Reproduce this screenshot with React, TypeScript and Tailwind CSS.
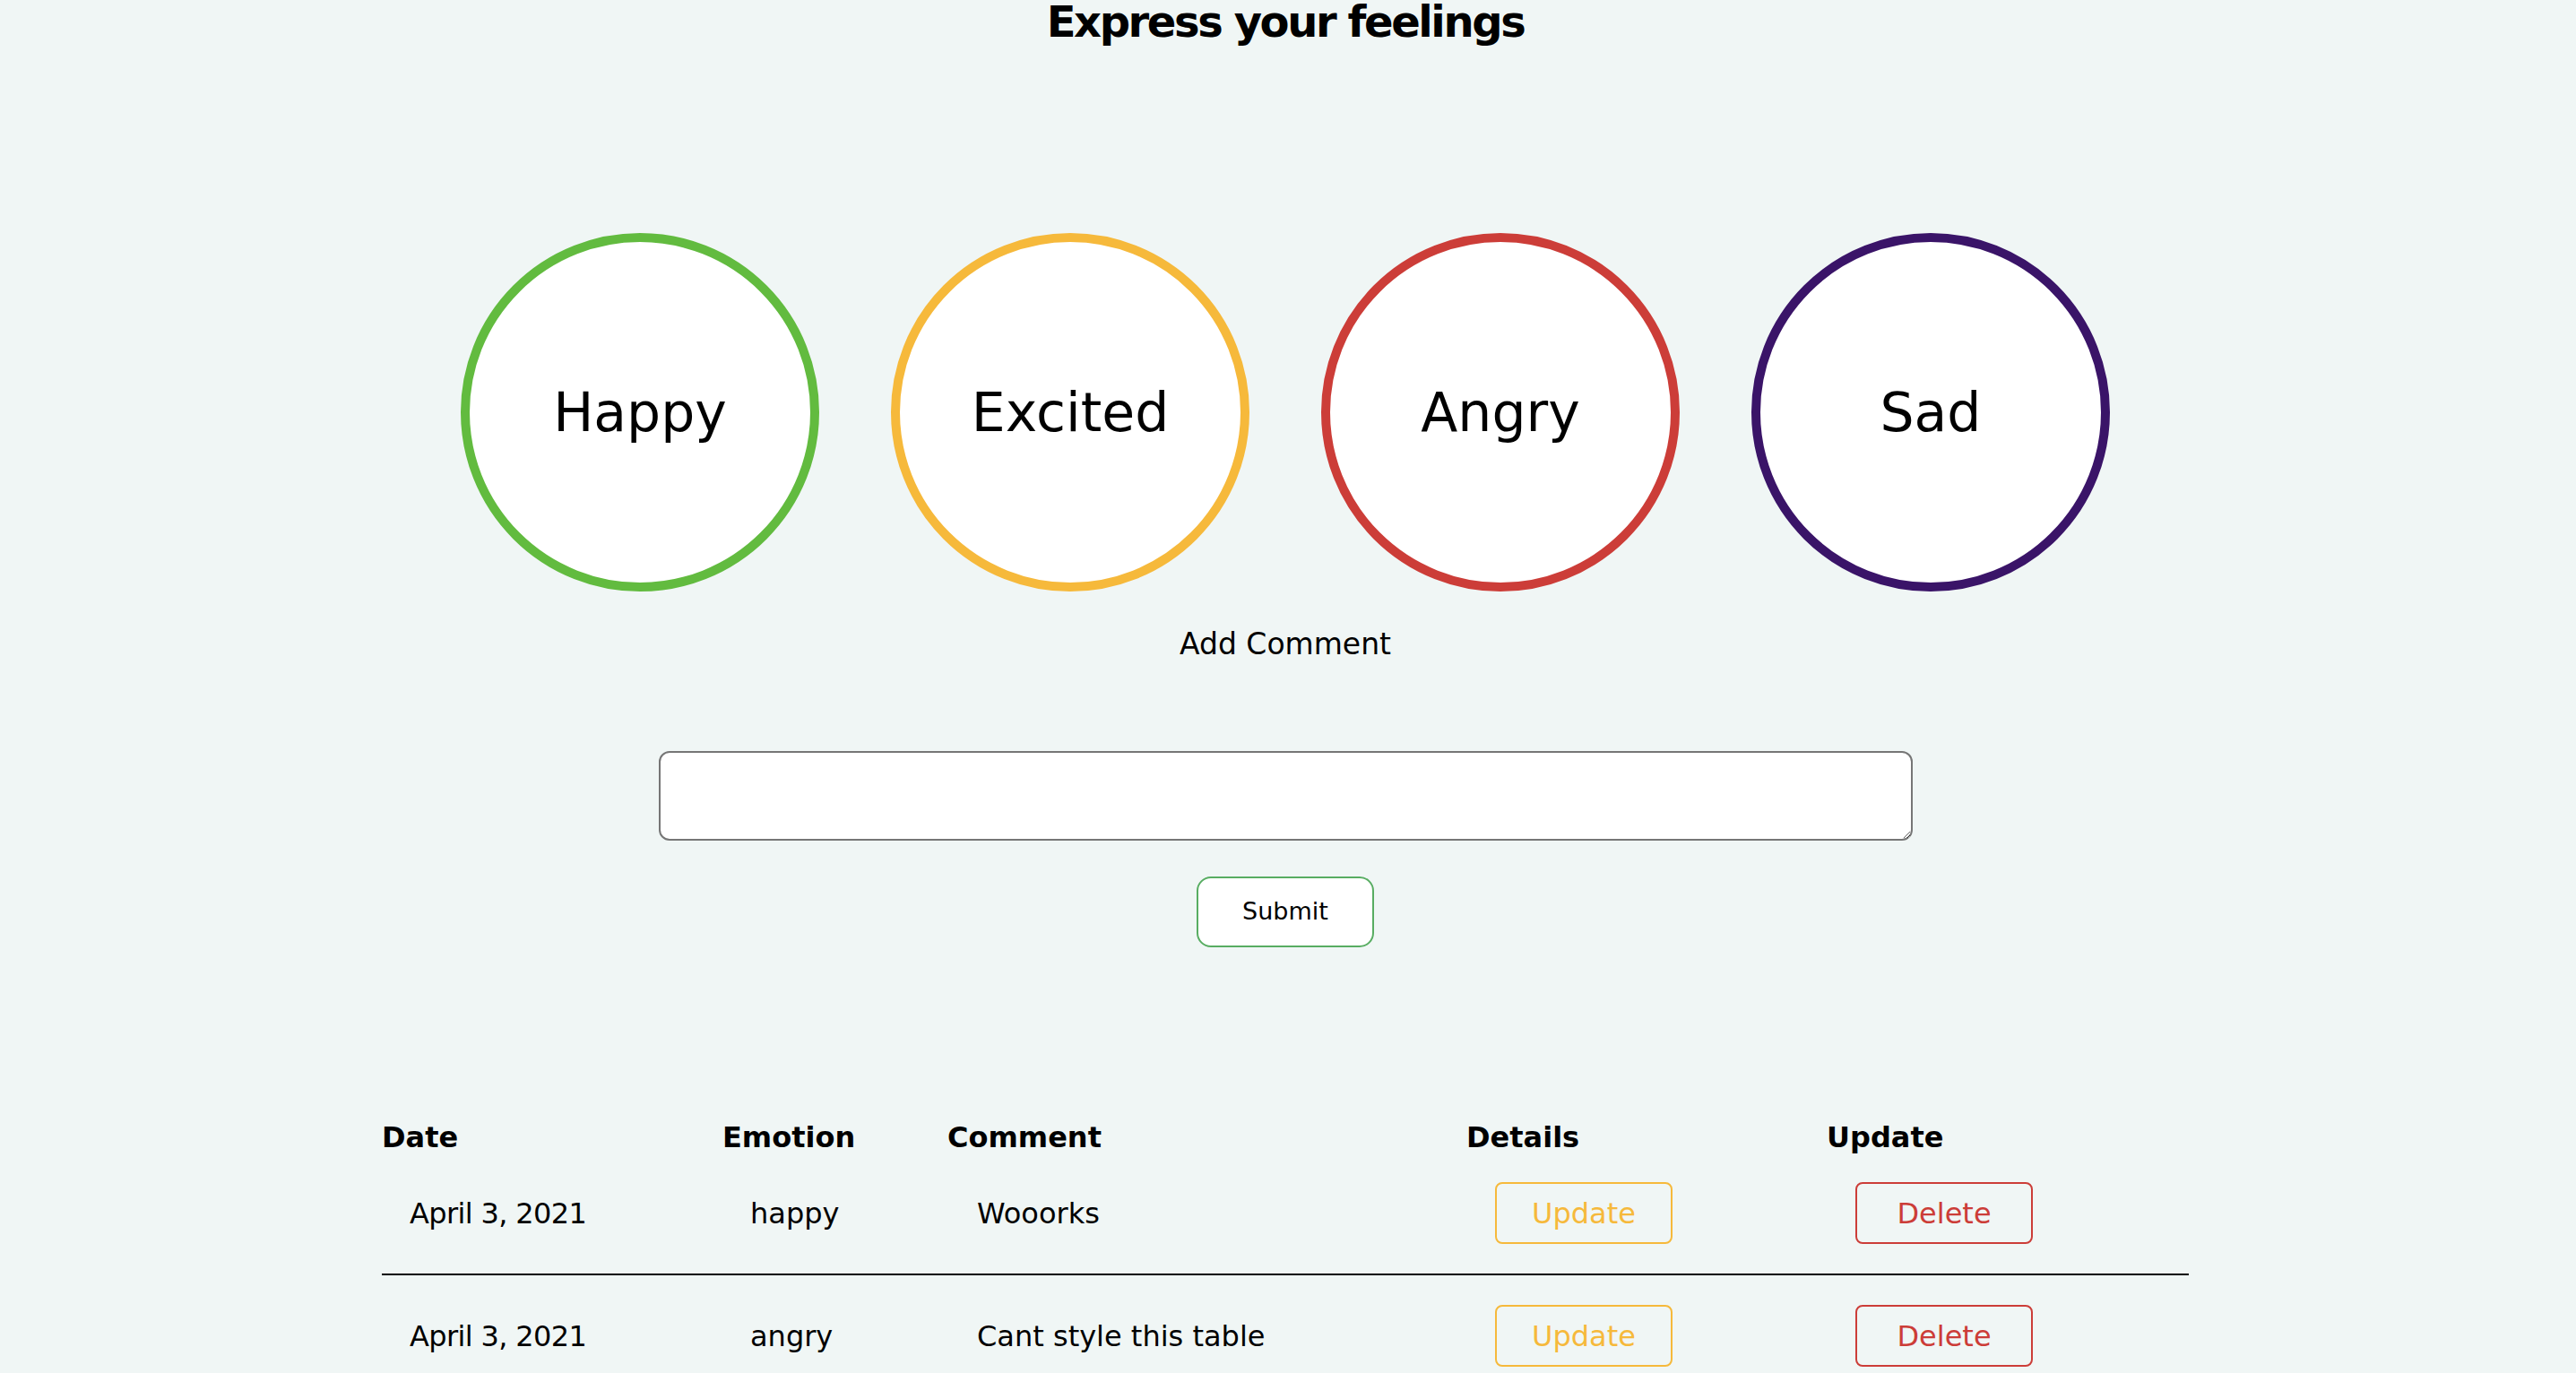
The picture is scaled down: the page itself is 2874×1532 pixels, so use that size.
import React from "react";

const moods = [
    { label: "Happy", ring: "border-[#62bb3f]" },
    { label: "Excited", ring: "border-[#f6b93b]" },
    { label: "Angry", ring: "border-[#cc3d38]" },
    { label: "Sad", ring: "border-[#3a1468]" },
];

const entries = [
    { date: "April 3, 2021", emotion: "happy", comment: "Wooorks" },
    { date: "April 3, 2021", emotion: "angry", comment: "Cant style this table" },
];

const cols = "grid grid-cols-[380px_251px_579px_402px_404px]";

export default function App() {
    return (
        <div className="min-h-screen bg-[#f0f6f5] text-black font-['DejaVu_Sans',sans-serif] flex flex-col items-center pr-[6px]">
            <h1 className="text-[48px] leading-[48px] font-bold tracking-[-0.05em]">Express your feelings</h1>

            <div className="mt-[212px] flex gap-[80px]">
                {moods.map((m) => (
                    <button
                        key={m.label}
                        className={`w-[400px] h-[400px] rounded-full bg-white border-[10px] ${m.ring} flex items-center justify-center text-[60px]`}
                    >
                        {m.label}
                    </button>
                ))}
            </div>

            <p className="mt-[42px] text-[33px] leading-[33px]">Add Comment</p>

            <textarea className="mt-[103px] w-[1399px] h-[100px] bg-white border-2 border-[#767676] rounded-[12px] outline-none resize-y" />

            <button className="mt-[40px] w-[198px] h-[79px] bg-white border-2 border-[#58ad62] rounded-[16px] text-[27px]">
                Submit
            </button>

            <div className="mt-[196px] w-[2016px]">
                <div className={`${cols} text-[32px] leading-[32px] font-bold pb-px`}>
                    <div>Date</div>
                    <div>Emotion</div>
                    <div>Comment</div>
                    <div>Details</div>
                    <div>Update</div>
                </div>
                {entries.map((e, i) => (
                    <div key={i} className={`${cols} items-center text-[32px] py-[33px] border-b-2 border-black`}>
                        <div className="pl-[31px] tracking-[-0.02em]">{e.date}</div>
                        <div className="pl-[31px]">{e.emotion}</div>
                        <div className="pl-[33px]">{e.comment}</div>
                        <div className="pl-[32px]">
                            <button className="w-[198px] h-[69px] border-2 border-[#f6b93b] rounded-[8px] text-[#f6b93b] text-[32px]">
                                Update
                            </button>
                        </div>
                        <div className="pl-[32px]">
                            <button className="w-[198px] h-[69px] border-2 border-[#cc3d38] rounded-[8px] text-[#cc3d38] text-[32px]">
                                Delete
                            </button>
                        </div>
                    </div>
                ))}
            </div>
        </div>
    );
}
